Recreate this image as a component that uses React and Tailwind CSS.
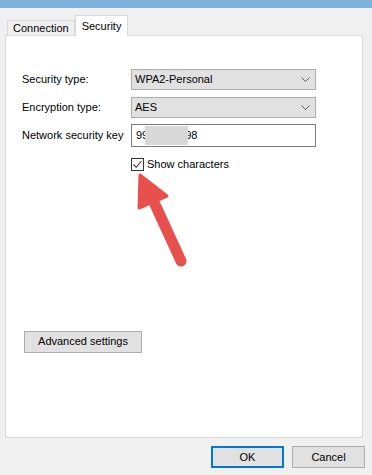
import React from "react";

function Chevron() {
  return (
    <svg width="9" height="5" viewBox="0 0 9 5" className="shrink-0">
      <path d="M0.5 0.5 L4.5 4.5 L8.5 0.5" fill="none" stroke="#606060" strokeWidth="1" />
    </svg>
  );
}

function Select({ value }) {
  return (
    <div className="h-[21px] w-[185px] bg-[#e1e1e1] border border-[#adadad] flex items-center justify-between pl-[3px] pr-[5px] text-[#000]">
      <span>{value}</span>
      <Chevron />
    </div>
  );
}

export default function App() {
  return (
    <div
      className="relative w-[372px] h-[475px] bg-[#f0f0f0] flex flex-col overflow-hidden text-[11px] text-black"
      style={{ fontFamily: '"Liberation Sans", Arial, sans-serif' }}
    >
      <div className="h-[8px] bg-[#80b3db]" />
      {/* tabs */}
      <div className="relative z-10 flex items-end h-[27px] pl-[7px]">
        <div className="h-[15px] px-[5px] flex items-center border border-b-0 border-[#d9d9d9] bg-[#f0f0f0]">
          Connection
        </div>
        <div className="h-[21px] mb-[-1px] px-[6px] flex items-center border border-b-0 border-[#d9d9d9] bg-white">
          Security
        </div>
      </div>
      {/* panel */}
      <div className="ml-[5px] w-[358px] h-[403px] bg-white border border-[#d9d9d9] pt-[33px] pl-[16px]">
        <div className="grid grid-cols-[109px_185px] items-center">
          <div>Security type:</div>
          <Select value="WPA2-Personal" />
        </div>
        <div className="grid grid-cols-[109px_185px] items-center mt-[7px]">
          <div>Encryption type:</div>
          <Select value="AES" />
        </div>
        <div className="grid grid-cols-[109px_185px] items-center mt-[6px]">
          <div>Network security key</div>
          <div className="relative h-[23px] w-[185px] bg-white border border-[#7a7a7a] flex items-center pl-[4px]">
            <span>99</span>
            <span className="ml-[37px]">98</span>
            <div className="absolute left-[13px] top-[1px] w-[43px] h-[19px] bg-[#d8d8d8]" />
          </div>
        </div>
        <div className="flex items-center ml-[109px] mt-[9px] gap-[3px]">
          <div className="w-[13px] h-[13px] border border-[#333333] bg-white flex items-center justify-center">
            <svg width="11" height="11" viewBox="0 0 11 11">
              <path d="M1.5 5.5 L4.2 8.3 L9.5 2" fill="none" stroke="#333333" strokeWidth="1.1" />
            </svg>
          </div>
          <span>Show characters</span>
        </div>
        <div className="mt-[158px] ml-[2px] w-[118px] h-[22px] bg-[#e1e1e1] border border-[#adadad] flex items-center justify-center">
          Advanced settings
        </div>
      </div>
      {/* bottom buttons */}
      <div className="flex justify-end gap-[8px] pr-[7px] mt-[8px]">
        <div className="w-[73px] h-[22px] bg-[#e1e1e1] border-2 border-[#0078d7] flex items-center justify-center">
          OK
        </div>
        <div className="w-[73px] h-[22px] bg-[#e1e1e1] border border-[#adadad] flex items-center justify-center">
          Cancel
        </div>
      </div>
      {/* annotation arrow */}
      <svg className="absolute left-0 top-0 pointer-events-none" width="372" height="475" viewBox="0 0 372 475">
        <line x1="153" y1="200" x2="181" y2="261" stroke="#e8504d" strokeWidth="11" strokeLinecap="round" />
        <polygon points="140,175 139,208 167,196" fill="#e8504d" stroke="#e8504d" strokeWidth="3" strokeLinejoin="round" />
      </svg>
    </div>
  );
}
